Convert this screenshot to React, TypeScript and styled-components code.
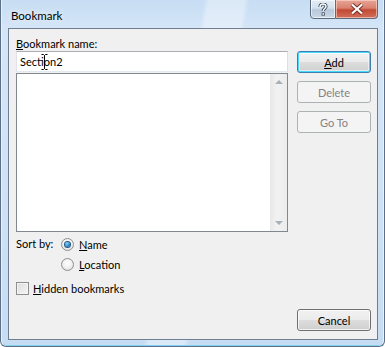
import React from "react";
import styled, { createGlobalStyle, css } from "styled-components";

const Global = createGlobalStyle`
  html, body { margin: 0; padding: 0; background: #ffffff; }
  body { font-family: "Segoe UI", Lato, "Noto Sans", sans-serif; font-size: 11px; color: #000; }
`;

const Window = styled.div`
  position: relative;
  width: 385px;
  height: 347px;
  box-sizing: border-box;
  overflow: hidden;
  display: flex;
  flex-direction: column;
  border-left: 1px solid #5d6f86;
  border-right: 1px solid #5d6f86;
  border-bottom: 1px solid #5d6f86;
  border-radius: 0 0 6px 6px;
  background:
    linear-gradient(100deg, transparent 0 200px, rgba(255,255,255,0.35) 205px 240px, transparent 245px 420px),
    linear-gradient(180deg, #c7ddf3 0%, #d4e5f7 8%, #cfe2f5 60%, #c6dcf3 100%);
  box-shadow: inset 1px 0 0 #e9f2fb, inset -1px 0 0 #e9f2fb, inset 0 -1px 0 #7fd2f0;
`;

const TitleBar = styled.div`
  height: 28px;
  display: flex;
  align-items: flex-start;
  justify-content: space-between;
  padding-left: 10px;
  padding-right: 6px;
`;

const Title = styled.span`
  margin-top: 9px;
  font-size: 11.5px;
  color: #000;
  text-shadow: 0 0 6px rgba(255,255,255,0.9);
`;

const Caption = styled.div`
  display: flex;
  margin-top: -1px;
`;

const CapBtn = styled.div<{ $close?: boolean }>`
  height: 20px;
  box-sizing: border-box;
  display: flex;
  align-items: center;
  justify-content: center;
  border: 1px solid #5b6a7e;
  ${(p) =>
    p.$close
      ? css`
          width: 42px;
          border-radius: 0 0 4px 0;
          border-left: none;
          background: linear-gradient(180deg, #e6a597 0%, #d98170 45%, #c24a35 55%, #d2705a 100%);
          box-shadow: inset 0 0 0 1px rgba(255,220,210,0.6);
        `
      : css`
          width: 26px;
          border-radius: 0 0 0 4px;
          background: linear-gradient(180deg, #e3ecf6 0%, #d3e0ee 45%, #b9c9da 55%, #cad8e7 100%);
          box-shadow: inset 0 0 0 1px rgba(255,255,255,0.6);
        `}
`;

const Client = styled.div`
  flex: 1;
  margin: 0 6px 6px 7px;
  border: 1px solid #6f7e90;
  background: #f0f0f0;
  display: flex;
  gap: 9px;
  padding: 7px 6px 8px 7px;
`;

const LeftCol = styled.div`
  width: 272px;
  display: flex;
  flex-direction: column;
`;

const RightCol = styled.div`
  display: flex;
  flex-direction: column;
  padding-top: 15px;
  width: 74px;
`;

const Label = styled.div`
  height: 15px;
  line-height: 15px;
`;

const TextBox = styled.div`
  position: relative;
  height: 21px;
  box-sizing: border-box;
  border: 1px solid #abadb3;
  border-left-color: #e2e3ea;
  border-right-color: #dbdfe6;
  border-bottom-color: #e3e9ef;
  background: #fff;
  padding: 2px 3px;
  line-height: 15px;
`;

const ListBox = styled.div`
  margin-top: 1px;
  height: 159px;
  box-sizing: border-box;
  border: 1px solid #828790;
  background: #fff;
  display: flex;
  justify-content: flex-end;
`;

const ScrollBar = styled.div`
  width: 17px;
  background: linear-gradient(90deg, #e8e8e8, #f2f2f2 40%, #ececec);
  display: flex;
  flex-direction: column;
  justify-content: space-between;
  align-items: center;
  padding: 6px 0;
`;

const Arrow = styled.div<{ $down?: boolean }>`
  width: 0;
  height: 0;
  border-left: 4px solid transparent;
  border-right: 4px solid transparent;
  ${(p) =>
    p.$down
      ? css`border-top: 4px solid #a9b0b6;`
      : css`border-bottom: 4px solid #a9b0b6;`}
`;

const SortRow = styled.div`
  display: flex;
  margin-top: 4px;
`;

const SortLabel = styled.div`
  width: 45px;
  line-height: 16px;
`;

const RadioList = styled.div`
  display: flex;
  flex-direction: column;
  gap: 4px;
`;

const Option = styled.label`
  display: flex;
  align-items: center;
  gap: 5px;
  height: 16px;
`;

const Radio = styled.span<{ $on?: boolean }>`
  width: 13px;
  height: 13px;
  box-sizing: border-box;
  border-radius: 50%;
  border: 1px solid #8e8f8f;
  background: radial-gradient(circle at 50% 40%, #ffffff 0%, #f0f0f0 50%, #d6d6d6 100%);
  display: flex;
  align-items: center;
  justify-content: center;
  &::after {
    content: "";
    display: ${(p) => (p.$on ? "block" : "none")};
    width: 5px;
    height: 5px;
    border-radius: 50%;
    background: radial-gradient(circle at 40% 35%, #8fd8ff 0%, #1b7fc4 60%, #0b4f8a 100%);
    box-shadow: 0 0 0 1px #25567d;
  }
`;

const CheckRow = styled.label`
  display: flex;
  align-items: center;
  gap: 4px;
  margin-top: 9px;
  height: 14px;
`;

const Check = styled.span`
  width: 13px;
  height: 13px;
  box-sizing: border-box;
  border: 1px solid #8e8f8f;
  background: linear-gradient(135deg, #dcdcdc, #f7f7f7);
  box-shadow: inset 0 0 0 1px #f4f4f4;
`;

const Button = styled.div<{ $default?: boolean; $disabled?: boolean; $gap?: number }>`
  height: 22px;
  box-sizing: border-box;
  margin-top: ${(p) => p.$gap ?? 0}px;
  border-radius: 3px;
  border: 1px solid #707070;
  display: flex;
  align-items: center;
  justify-content: center;
  background: linear-gradient(180deg, #f2f2f2 0%, #ebebeb 48%, #dddddd 52%, #cfcfcf 100%);
  box-shadow: inset 0 0 0 1px rgba(255,255,255,0.7);
  ${(p) =>
    p.$default &&
    css`
      border-color: #3c7fb1;
      box-shadow: inset 0 0 0 1px #48d8fb, inset 0 0 0 2px rgba(255,255,255,0.5);
    `}
  ${(p) =>
    p.$disabled &&
    css`
      border-color: #adb2b5;
      background: #f4f4f4;
      color: #838383;
      box-shadow: none;
    `}
`;

const Spacer = styled.div`
  flex: 1;
`;

const U = styled.span`
  text-decoration: underline;
  text-underline-offset: 1px;
`;

const IBeam = styled.svg`
  position: absolute;
  left: 24px;
  top: 2px;
`;

export default function App() {
  return (
    <>
      <Global />
      <Window>
        <TitleBar>
          <Title>Bookmark</Title>
          <Caption>
            <CapBtn>
              <svg width="10" height="13" viewBox="0 0 10 13">
                <path
                  d="M2 4 C2 1.5 3.5 1 5 1 C6.8 1 8 2 8 3.6 C8 5.4 5.2 5.8 5.2 8"
                  fill="none"
                  stroke="#3c4a5c"
                  strokeWidth="3.2"
                />
                <path
                  d="M2 4 C2 1.5 3.5 1 5 1 C6.8 1 8 2 8 3.6 C8 5.4 5.2 5.8 5.2 8"
                  fill="none"
                  stroke="#ffffff"
                  strokeWidth="1.4"
                />
                <rect x="3.6" y="9.4" width="3.2" height="3.2" fill="#3c4a5c" />
                <rect x="4.4" y="10.2" width="1.6" height="1.6" fill="#fff" />
              </svg>
            </CapBtn>
            <CapBtn $close>
              <svg width="14" height="12" viewBox="0 0 14 12">
                <path d="M2 1.5 L12 10.5 M12 1.5 L2 10.5" stroke="#7a2a20" strokeWidth="4" />
                <path d="M2 1.5 L12 10.5 M12 1.5 L2 10.5" stroke="#ffffff" strokeWidth="2.2" />
              </svg>
            </CapBtn>
          </Caption>
        </TitleBar>
        <Client>
          <LeftCol>
            <Label>
              <U>B</U>ookmark name:
            </Label>
            <TextBox>
              Section2
              <IBeam width="7" height="16" viewBox="0 0 7 16">
                <path d="M0.5 0.5 H2.5 L3.5 1.5 L4.5 0.5 H6.5 M3.5 1.5 V14.5 M0.5 15.5 H2.5 L3.5 14.5 L4.5 15.5 H6.5" stroke="#000" fill="none" strokeWidth="1" />
              </IBeam>
            </TextBox>
            <ListBox>
              <ScrollBar>
                <Arrow />
                <Arrow $down />
              </ScrollBar>
            </ListBox>
            <SortRow>
              <SortLabel>Sort by:</SortLabel>
              <RadioList>
                <Option>
                  <Radio $on />
                  <span>
                    <U>N</U>ame
                  </span>
                </Option>
                <Option>
                  <Radio />
                  <span>
                    <U>L</U>ocation
                  </span>
                </Option>
              </RadioList>
            </SortRow>
            <CheckRow>
              <Check />
              <span>
                <U>H</U>idden bookmarks
              </span>
            </CheckRow>
          </LeftCol>
          <RightCol>
            <Button $default>
              <span>
                <U>A</U>dd
              </span>
            </Button>
            <Button $disabled $gap={8}>
              Delete
            </Button>
            <Button $disabled $gap={8}>
              Go To
            </Button>
            <Spacer />
            <Button>Cancel</Button>
          </RightCol>
        </Client>
      </Window>
    </>
  );
}
